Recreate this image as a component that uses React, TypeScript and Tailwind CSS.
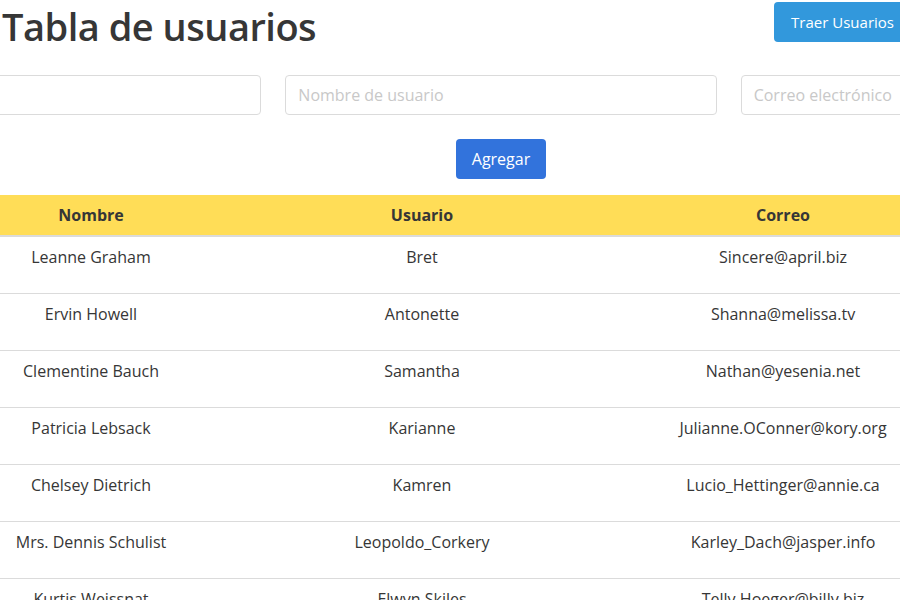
const users = [
  { name: 'Leanne Graham', username: 'Bret', email: 'Sincere@april.biz' },
  { name: 'Ervin Howell', username: 'Antonette', email: 'Shanna@melissa.tv' },
  { name: 'Clementine Bauch', username: 'Samantha', email: 'Nathan@yesenia.net' },
  { name: 'Patricia Lebsack', username: 'Karianne', email: 'Julianne.OConner@kory.org' },
  { name: 'Chelsey Dietrich', username: 'Kamren', email: 'Lucio_Hettinger@annie.ca' },
  { name: 'Mrs. Dennis Schulist', username: 'Leopoldo_Corkery', email: 'Karley_Dach@jasper.info' },
  { name: 'Kurtis Weissnat', username: 'Elwyn.Skiles', email: 'Telly.Hoeger@billy.biz' },
  { name: 'Nicholas Runolfsdottir V', username: 'Maxime_Nienow', email: 'Sherwood@rosamond.me' },
]

export default function App() {
  return (
    <div
      className="w-[900px] h-[600px] overflow-hidden bg-white text-[#363636] text-base"
      style={{ fontFamily: '"Open Sans", "Noto Sans", sans-serif' }}
    >
      <div className="flex justify-between items-start w-[911px] pl-[2px]">
        <h1 className="text-[38px] leading-[52px] font-semibold text-[#363636] tracking-[-0.5px]">
          Tabla de usuarios
        </h1>
        <button className="mt-[2px] h-10 px-[17px] rounded bg-[#3298dc] text-white text-[15px]">
          Traer Usuarios
        </button>
      </div>

      <div className="ml-[-170px] w-[1342px] mt-[23px]">
        <div className="grid grid-cols-3 gap-6">
          <input className="h-10 border border-[#dbdbdb] rounded px-3 outline-none placeholder:text-[#c8c8c8]" placeholder="Nombre" />
          <input className="h-10 border border-[#dbdbdb] rounded px-3 outline-none placeholder:text-[#c8c8c8]" placeholder="Nombre de usuario" />
          <input className="h-10 border border-[#dbdbdb] rounded px-3 outline-none placeholder:text-[#c8c8c8]" placeholder="Correo electrónico" />
        </div>
        <div className="flex justify-center mt-6">
          <button className="h-10 px-4 rounded bg-[#3273dc] text-white">Agregar</button>
        </div>
      </div>

      <table className="mt-4 w-[904px] table-fixed border-collapse">
        <colgroup>
          <col className="w-[182px]" />
          <col className="w-[480px]" />
          <col className="w-[242px]" />
        </colgroup>
        <thead>
          <tr className="bg-[#ffdd57] border-b-2 border-[#dbdbdb]">
            <th className="py-2 px-3 leading-6 font-bold">Nombre</th>
            <th className="py-2 px-3 leading-6 font-bold">Usuario</th>
            <th className="py-2 px-3 leading-6 font-bold">Correo</th>
          </tr>
        </thead>
        <tbody>
          {users.map((u) => (
            <tr key={u.username} className="border-b border-[#dbdbdb] h-[57px]">
              <td className="align-top pt-2 px-0 text-center leading-6 whitespace-nowrap">{u.name}</td>
              <td className="align-top pt-2 px-0 text-center leading-6 whitespace-nowrap">{u.username}</td>
              <td className="align-top pt-2 px-0 text-center leading-6 whitespace-nowrap">{u.email}</td>
            </tr>
          ))}
        </tbody>
      </table>
    </div>
  )
}
